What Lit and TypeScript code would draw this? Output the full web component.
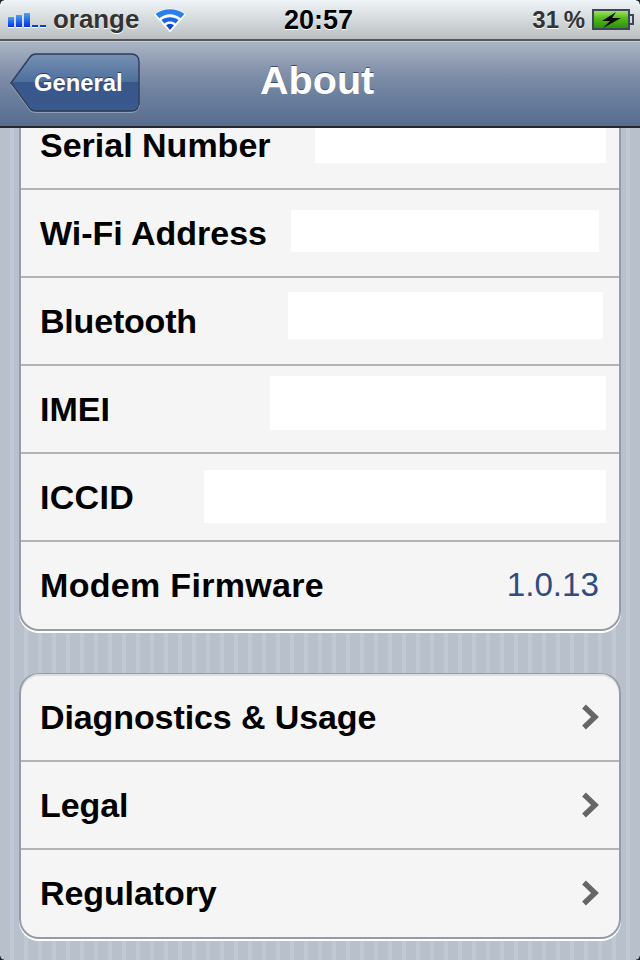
import { LitElement, html, css, svg } from "lit";
import { customElement } from "lit/decorators.js";

const groupOne = [
  { label: "Serial Number", track: 0, mask: { x: 315, y: 128, w: 291, h: 35 } },
  { label: "Wi-Fi Address", track: 0, mask: { x: 291, y: 210, w: 308, h: 42 } },
  { label: "Bluetooth", track: -0.2, mask: { x: 288, y: 292, w: 315, h: 47 } },
  { label: "IMEI", track: 0, mask: { x: 270, y: 376, w: 336, h: 54 } },
  { label: "ICCID", track: 0.3, mask: { x: 204, y: 470, w: 402, h: 53 } },
];
const groupTwo = [
  { label: "Diagnostics & Usage", track: -0.1 },
  { label: "Legal", track: -0.1 },
  { label: "Regulatory", track: -0.1 },
];

const chevron = svg`<svg class="chev" width="18" height="26" viewBox="0 0 18 26"><path d="M3 2.5 L14 13 L3 23.5" fill="none" stroke="#666" stroke-width="5.4"/></svg>`;

@customElement("app-root")
export class AppRoot extends LitElement {
  static styles = css`
    :host {
      display: block;
      width: 640px;
      height: 960px;
      overflow: hidden;
      position: relative;
      font-family: "Liberation Sans", Arial, sans-serif;
      background-color: #b7c0cb;
      background-image: repeating-linear-gradient(90deg, #b7c0cb 0 10px, #c0c8d2 10px 14px);
    }
    .status {
      height: 39px;
      display: flex;
      align-items: center;
      padding: 0 6px 0 8px;
      box-sizing: border-box;
      background: linear-gradient(#eef4f7 0, #dfe4e7 12px, #babfc2 39px);
      position: relative;
    }
    .carrier {
      font-size: 25.9px;
      font-weight: 700;
      color: #333;
      text-shadow: 0 1px 0 #fff;
      margin-left: 6px;
      width: 100px;
    }
    .wifi { display: block; }
    .time {
      position: absolute;
      left: 284px;
      top: 4px;
      font-size: 27px;
      line-height: 32px;
      font-weight: 700;
      color: #000;
      text-shadow: 0 1px 0 #fff;
    }
    .batt-wrap {
      margin-left: auto;
      display: flex;
      align-items: center;
      gap: 7px;
    }
    .pct {
      font-size: 24px;
      font-weight: 700;
      color: #333;
      text-shadow: 0 1px 0 #fff;
      word-spacing: -2px;
    }
    .nav {
      height: 89px;
      box-sizing: border-box;
      border-top: 2px solid #54575c;
      border-bottom: 2px solid #24282e;
      box-shadow: inset 0 1px 0 #c9d0da;
      background: linear-gradient(#abb6c6 0, #8593ac 34%, #6d809e 62%, #576c8e 100%);
      display: flex;
      align-items: center;
      position: relative;
      z-index: 1;
    }
    .back {
      position: relative;
      margin-left: 10px;
      width: 130px;
      height: 60px;
      display: flex;
      align-items: center;
      box-sizing: border-box;
      padding-left: 24px;
      margin-top: -1px;
      font-size: 23.8px;
      font-weight: 700;
      color: #fff;
      text-shadow: 0 -1px 0 #2c3e5e;
    }
    .back svg { position: absolute; left: 0; top: 0; }
    .back span { position: relative; }
    .title {
      position: absolute;
      left: 260px;
      top: 17px;
      font-size: 39.6px;
      line-height: 44px;
      font-weight: 700;
      color: #fff;
      text-shadow: 0 -1px 0 #3e4f6c;
    }
    .content {
      padding: 0 19px;
      box-sizing: border-box;
      display: flex;
      flex-direction: column;
      gap: 42px;
    }
    .group {
      flex: none;
      background: #f5f5f5;
      border: 2px solid #949ca5;
      border-top-width: 1px;
      border-radius: 20px;
      box-shadow: 0 2px 0 #fff, inset 0 2px 0 #dedede;
    }
    .group.first { margin-top: -27px; }
    .row {
      height: 88px;
      box-sizing: border-box;
      padding: 0 20px 0 19px;
      display: flex;
      align-items: center;
      justify-content: space-between;
      font-size: 34px;
      line-height: 34px;
      font-weight: 700;
      color: #000;
      border-bottom: 2px solid #b4b4b4;
    }
    .row:last-child { border-bottom: 0; height: 87px; padding-bottom: 1px; }
    .modem { letter-spacing: 0.32px; }
    .value {
      font-weight: 400;
      color: #2f4b80;
      font-size: 33.2px;
    }
    .mask {
      position: absolute;
      background: #fff;
    }
    .corner {
      position: absolute;
      z-index: 2;
      width: 4px;
      height: 4px;
      background: radial-gradient(circle at 100% 100%, transparent 3px, #222 4px);
    }
    .tl { left: 0; top: 0; }
    .tr { right: 0; top: 0; transform: scaleX(-1); }
    .bl { left: 0; bottom: 0; transform: scaleY(-1); }
    .br { right: 0; bottom: 0; transform: scale(-1, -1); }
  `;

  render() {
    return html`
      <div class="status">
        <svg width="39" height="16" viewBox="0 0 39 16" style="margin-top:1px">
          <defs>
            <linearGradient id="sig" x1="0" y1="0" x2="0" y2="1">
              <stop offset="0" stop-color="#48a4f0" />
              <stop offset="1" stop-color="#0630e0" />
            </linearGradient>
          </defs>
          <g fill="#fff">
            <rect x="0" y="6" width="6" height="10" /><rect x="8" y="4" width="6" height="12" />
            <rect x="16" y="2" width="6" height="14" /><rect x="24" y="14" width="6" height="2" />
            <rect x="32" y="14" width="6" height="2" />
          </g>
          <g fill="url(#sig)">
            <rect x="0" y="5" width="6" height="10" /><rect x="8" y="3" width="6" height="12" />
            <rect x="16" y="1" width="6" height="14" />
          </g>
          <rect x="24" y="13" width="6" height="2" fill="#0a3ae0" />
          <rect x="32" y="13" width="6" height="2" fill="#0a3ae0" />
        </svg>
        <span class="carrier">orange</span>
        <svg class="wifi" width="34" height="26" viewBox="0 0 34 26">
          <path d="M17 25.5 L1 7.5 C10 -0.5 24 -0.5 33 7.5 Z" fill="#fff" />
          <path d="M2.5 7 C10 0.5 24 0.5 31.5 7 L27.6 11.2 C21 6 13 6 6.4 11.2 Z" fill="#2a7fe8" />
          <path d="M8.5 13 C13 9.2 21 9.2 25.5 13 L22.6 16.4 C19.5 13.8 14.5 13.8 11.4 16.4 Z" fill="#1a66e4" />
          <path d="M13 18.3 C15.5 16.3 18.5 16.3 21 18.3 L17 23 Z" fill="#0a45dc" />
        </svg>
        <span class="time">20:57</span>
        <div class="batt-wrap">
          <span class="pct">31 %</span>
          <svg width="42" height="22" viewBox="0 0 42 22">
            <defs>
              <linearGradient id="bt" x1="0" y1="0" x2="0" y2="1">
                <stop offset="0" stop-color="#a8e868" />
                <stop offset="0.45" stop-color="#52b81a" />
                <stop offset="1" stop-color="#2c8a08" />
              </linearGradient>
            </defs>
            <rect x="1" y="1" width="36" height="19" fill="url(#bt)" stroke="#3c4658" stroke-width="2" />
            <path d="M38 6 H41 V15 H38" fill="none" stroke="#3c4658" stroke-width="2" />
            <path d="M24 3 L10 12 H18 L11 19 L29 9 H20 Z" fill="#050505" />
          </svg>
        </div>
      </div>
      <div class="nav">
        <div class="back">
          <svg width="130" height="60" viewBox="0 0 130 60">
            <defs>
              <linearGradient id="bk" x1="0" y1="0" x2="0" y2="1">
                <stop offset="0" stop-color="#7690b3" />
                <stop offset="0.5" stop-color="#4d6e9c" />
                <stop offset="0.5" stop-color="#38568a" />
                <stop offset="1" stop-color="#395a8f" />
              </linearGradient>
            </defs>
            <path d="M1 30 L20 4 Q22 1 26 1 H121 Q129 1 129 9 V51 Q129 58 121 58 H26 Q22 58 20 56 Z" fill="url(#bk)" stroke="#2f3d57" stroke-width="1.4" />
            <path d="M1 31.5 L20 57.5 Q22 59.5 26 59.5 H121 Q129 59.5 129.5 52" fill="none" stroke="#a3b0c2" stroke-width="1" opacity=".7" />
          </svg>
          <span>General</span>
        </div>
        <span class="title">About</span>
      </div>
      <div class="content">
        <div class="group first">
          ${groupOne.map(
            (r) => html`<div class="row"><span style="letter-spacing:${r.track}px">${r.label}</span></div>`
          )}
          <div class="row"><span class="modem">Modem Firmware</span><span class="value">1.0.13</span></div>
        </div>
        <div class="group">
          ${groupTwo.map(
            (r) => html`<div class="row"><span style="letter-spacing:${r.track}px">${r.label}</span>${chevron}</div>`
          )}
        </div>
      </div>
      ${groupOne.map(
        (r) =>
          html`<div class="mask" style="left:${r.mask.x}px;top:${r.mask.y}px;width:${r.mask.w}px;height:${r.mask.h}px"></div>`
      )}
      <i class="corner tl"></i><i class="corner tr"></i><i class="corner bl"></i><i class="corner br"></i>
    `;
  }
}
